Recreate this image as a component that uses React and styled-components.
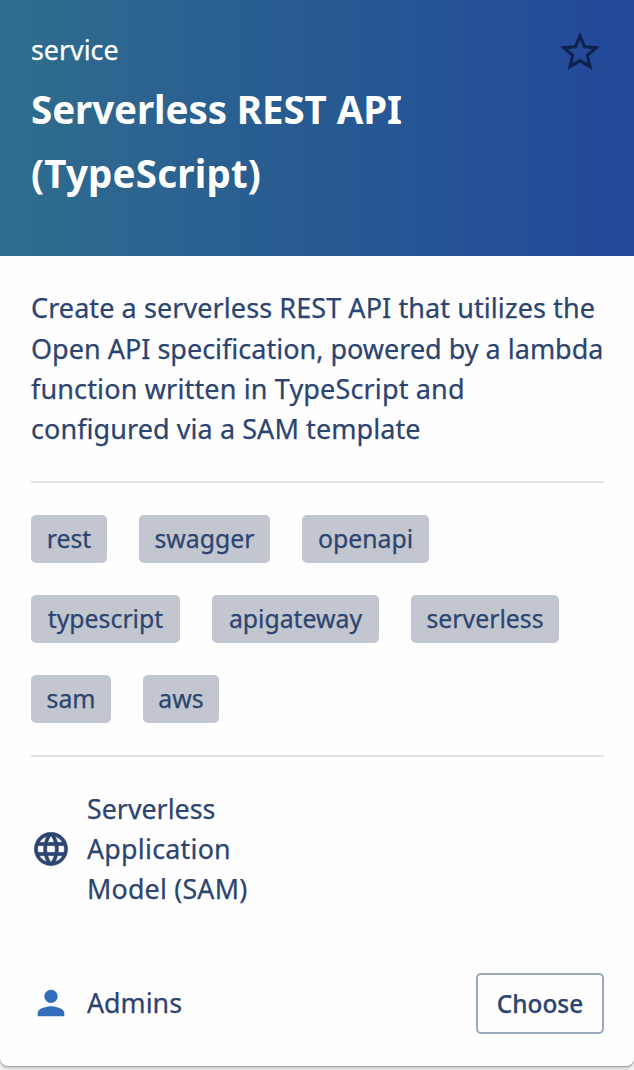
import React from 'react';
import styled, { createGlobalStyle } from 'styled-components';
import { MdLanguage, MdPerson, MdStarBorder } from 'react-icons/md';

const GlobalStyle = createGlobalStyle`
  * { box-sizing: border-box; }
  body {
    margin: 0;
    background: #fafafa;
    color: #2c4470;
    font-family: 'Noto Sans', 'Open Sans', sans-serif;
    -webkit-text-stroke: 0.25px currentColor;
  }
`;

const Page = styled.main`
  height: 1070px;
  overflow: hidden;
  background: #fafafa;
`;

const Card = styled.article`
  width: 634px;
  height: 1066px;
  display: flex;
  flex-direction: column;
  background: #fefefe;
  border-radius: 0 0 8px 8px;
  box-shadow: 0 1px 0 #a9a9a9, 0 2px 0 #cbcbcb, 0 3px 4px rgba(0, 0, 0, 0.2);
`;

const Header = styled.header`
  height: 256px;
  flex: none;
  display: flex;
  justify-content: space-between;
  align-items: flex-start;
  padding: 28px 30px 0 31px;
  color: #fff;
  background: linear-gradient(90deg, #2f6d8c 0%, #2b6191 30%, #265893 58%, #23479a 100%);
`;

const Line = styled.span`
  display: block;
  white-space: nowrap;
  letter-spacing: ${({ $tracking = 0 }) => $tracking}px;
`;

const Kind = styled.p`
  margin: 2px 0 7px;
  font-size: 26.8px;
  line-height: 40px;
`;

const Title = styled.h1`
  margin: 0;
  font-size: 38.5px;
  line-height: 64px;
  font-weight: 700;
  -webkit-text-stroke: 0;
`;

const Favorite = styled.button`
  display: flex;
  margin: 0;
  padding: 0;
  border: 0;
  background: none;
  color: #0e2250;
`;

const Body = styled.div`
  flex: 1;
  display: flex;
  flex-direction: column;
  padding: 32px 30px 32px 31px;
`;

const Description = styled.p`
  margin: 0;
  padding: 0.4px 0 31.8px;
  border-bottom: 2px solid #e2e2e3;
  font-size: 27px;
  line-height: 40.2px;
`;

const Tags = styled.ul`
  display: flex;
  flex-wrap: wrap;
  gap: 32px;
  margin: 0;
  padding: 32px 0;
  list-style: none;
  border-bottom: 2px solid #e2e2e3;
`;

const Tag = styled.li`
  width: ${({ $width }) => $width}px;
  height: 48px;
  display: flex;
  justify-content: center;
  border-radius: 5px;
  background: #c2c6cf;
  font-size: 24.8px;
  line-height: 47px;
`;

const Detail = styled.div`
  display: flex;
  align-items: center;
  gap: 16px;
  font-size: 26.8px;
  line-height: 40px;
`;

const Platform = styled(Detail)`
  margin-top: 32px;
`;

const GlobeIcon = styled(MdLanguage)`
  path:last-child {
    stroke: currentColor;
    stroke-width: 0.25px;
  }
`;

const Owner = styled(Detail)`
  margin-bottom: 2px;
`;

const Footer = styled.footer`
  display: flex;
  align-items: center;
  justify-content: space-between;
  margin-top: auto;
`;

const ChooseButton = styled.button`
  width: 128px;
  height: 61px;
  padding: 0;
  border: 2px solid #9ca8be;
  border-radius: 5px;
  background: #fefefe;
  color: #2c4470;
  font-family: inherit;
  font-size: 24.4px;
  font-weight: 500;
  line-height: 40px;
`;

const title = [
  { text: 'Serverless REST API', tracking: -0.08 },
  { text: '(TypeScript)', tracking: 0.2 },
];

const description = [
  { text: 'Create a serverless REST API that utilizes the', tracking: 0.08 },
  { text: 'Open API specification, powered by a lambda', tracking: 0 },
  { text: 'function written in TypeScript and', tracking: 0.15 },
  { text: 'configured via a SAM template', tracking: 0.07 },
];

const platform = [
  { text: 'Serverless', tracking: 0 },
  { text: 'Application', tracking: 0.25 },
  { text: 'Model (SAM)', tracking: 0.2 },
];

const tags = [
  { name: 'rest', width: 76 },
  { name: 'swagger', width: 131 },
  { name: 'openapi', width: 127 },
  { name: 'typescript', width: 149 },
  { name: 'apigateway', width: 167 },
  { name: 'serverless', width: 148 },
  { name: 'sam', width: 80 },
  { name: 'aws', width: 76 },
];

function Lines({ items }) {
  return items.map(({ text, tracking }) => (
    <Line key={text} $tracking={tracking}>
      {text}
    </Line>
  ));
}

export default function App() {
  return (
    <Page>
      <GlobalStyle />
      <Card>
        <Header>
          <div>
            <Kind>service</Kind>
            <Title>
              <Lines items={title} />
            </Title>
          </div>
          <Favorite aria-label="Add to favorites">
            <MdStarBorder size={48} />
          </Favorite>
        </Header>
        <Body>
          <Description>
            <Lines items={description} />
          </Description>
          <Tags>
            {tags.map(({ name, width }) => (
              <Tag key={name} $width={width}>
                {name}
              </Tag>
            ))}
          </Tags>
          <Platform>
            <GlobeIcon size={40} />
            <div>
              <Lines items={platform} />
            </div>
          </Platform>
          <Footer>
            <Owner>
              <MdPerson size={40} color="#326eba" />
              <span>Admins</span>
            </Owner>
            <ChooseButton>Choose</ChooseButton>
          </Footer>
        </Body>
      </Card>
    </Page>
  );
}
